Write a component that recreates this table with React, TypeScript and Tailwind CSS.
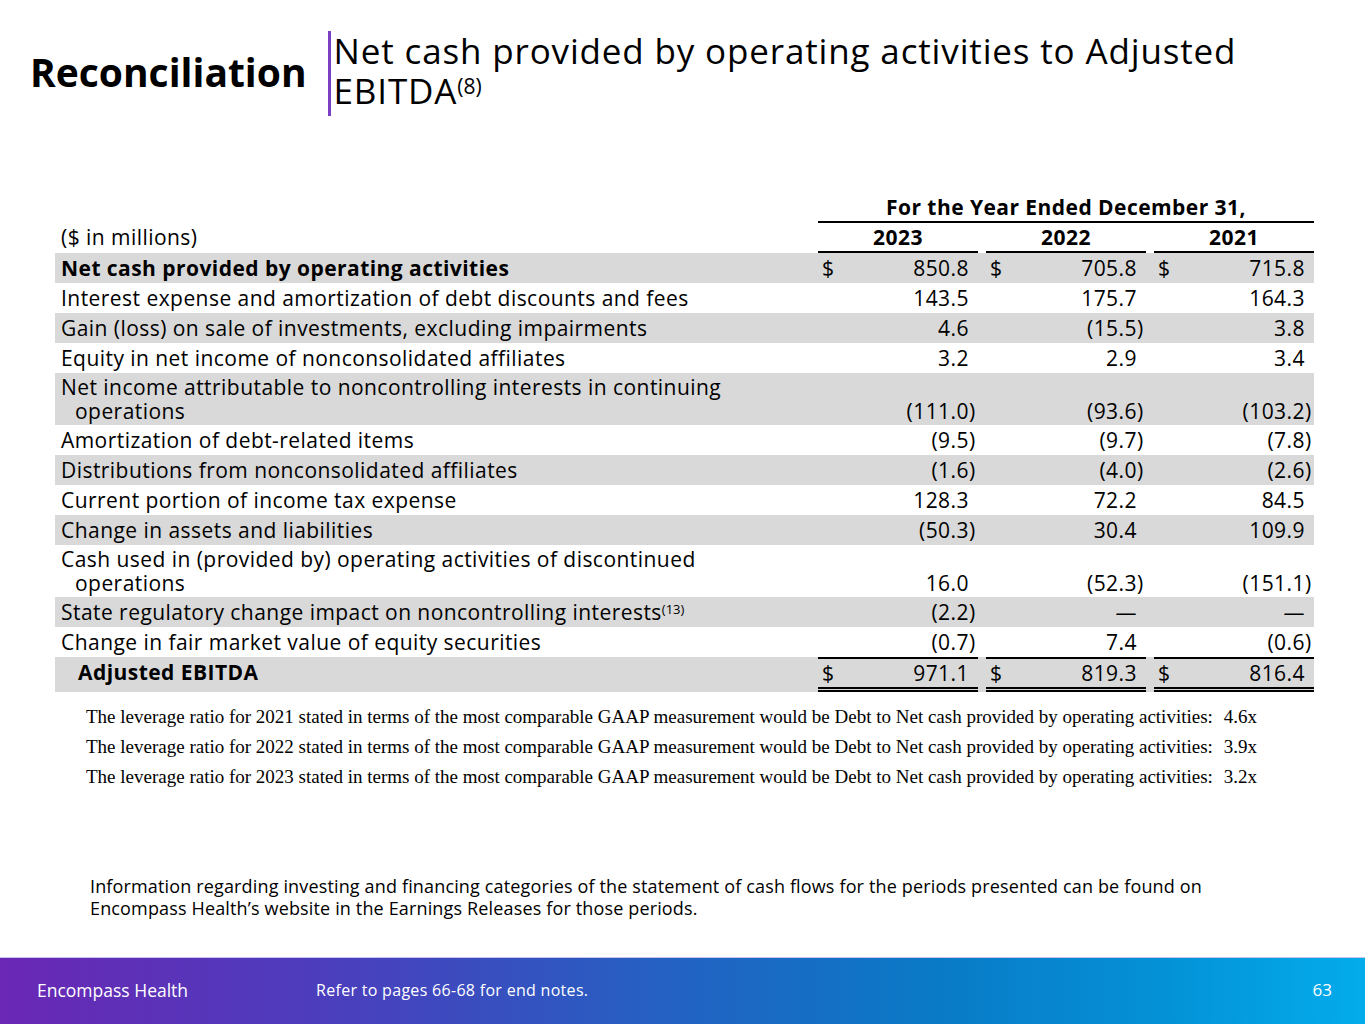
import React from 'react'

type Row = {
  label: string
  cont?: string
  sup?: string
  values: string[]
  dollar?: boolean
  bold?: boolean
  indent?: boolean
  total?: boolean
}

const rows: Row[] = [
  { label: 'Net cash provided by operating activities', values: ['850.8', '705.8', '715.8'], dollar: true, bold: true },
  { label: 'Interest expense and amortization of debt discounts and fees', values: ['143.5', '175.7', '164.3'] },
  { label: 'Gain (loss) on sale of investments, excluding impairments', values: ['4.6', '(15.5)', '3.8'] },
  { label: 'Equity in net income of nonconsolidated affiliates', values: ['3.2', '2.9', '3.4'] },
  {
    label: 'Net income attributable to noncontrolling interests in continuing',
    cont: 'operations',
    values: ['(111.0)', '(93.6)', '(103.2)'],
  },
  { label: 'Amortization of debt-related items', values: ['(9.5)', '(9.7)', '(7.8)'] },
  { label: 'Distributions from nonconsolidated affiliates', values: ['(1.6)', '(4.0)', '(2.6)'] },
  { label: 'Current portion of income tax expense', values: ['128.3', '72.2', '84.5'] },
  { label: 'Change in assets and liabilities', values: ['(50.3)', '30.4', '109.9'] },
  {
    label: 'Cash used in (provided by) operating activities of discontinued',
    cont: 'operations',
    values: ['16.0', '(52.3)', '(151.1)'],
  },
  { label: 'State regulatory change impact on noncontrolling interests', sup: '(13)', values: ['(2.2)', '—', '—'] },
  { label: 'Change in fair market value of equity securities', values: ['(0.7)', '7.4', '(0.6)'] },
  { label: 'Adjusted EBITDA', values: ['971.1', '819.3', '816.4'], dollar: true, bold: true, indent: true, total: true },
]

const leverage = [
  { year: '2021', ratio: '4.6x' },
  { year: '2022', ratio: '3.9x' },
  { year: '2023', ratio: '3.2x' },
]

function Value({ v, dollar, total }: { v: string; dollar?: boolean; total?: boolean }) {
  const neg = v.startsWith('(')
  const body = neg ? v.slice(0, -1) : v
  return (
    <div
      className={
        'flex items-end justify-between pl-[4px] ' +
        (total ? 'border-t-2 border-b-[5px] border-black leading-[28px]' : '')
      }
      style={total ? { borderBottomStyle: 'double' } : undefined}
    >
      <span>{dollar ? '$' : ''}</span>
      <span className="flex">
        <span>{body}</span>
        <span className="inline-block w-[9px] text-left">{neg ? ')' : ''}</span>
      </span>
    </div>
  )
}

export default function App() {
  return (
    <div
      className="relative flex h-[1024px] w-[1365px] flex-col overflow-hidden bg-white text-black"
      style={{ fontFamily: '"Open Sans", sans-serif' }}
    >
      {/* title */}
      <div className="flex items-start pl-[30px] pt-[31px]">
        <div className="mt-[16px] text-[39px] font-bold leading-[50px]">Reconciliation</div>
        <div className="ml-[21px] h-[85px] w-[3px] bg-[#7b3fc4]" />
        <div className="ml-[3px] text-[35px] leading-[40px] tracking-[0.85px]">
          Net cash provided by operating activities to Adjusted
          <br />
          EBITDA<sup className="text-[21px] tracking-normal">(8)</sup>
        </div>
      </div>

      {/* table */}
      <div className="ml-[55px] mt-[77px] w-[1259px] text-[21px] tracking-[0.45px]">
        <div className="grid grid-cols-[755px_160px_160px_160px] gap-x-2">
          <div />
          <div className="col-span-3 border-b-2 border-black text-center font-bold leading-[28px]">
            For the Year Ended December 31,
          </div>
        </div>
        <div className="grid h-[30px] grid-cols-[755px_160px_160px_160px] gap-x-2">
          <div className="pl-[6px] leading-[28px]">($ in millions)</div>
          {['2023', '2022', '2021'].map((y) => (
            <div key={y} className="border-b-2 border-black text-center font-bold leading-[28px]">
              {y}
            </div>
          ))}
        </div>
        {rows.map((r, i) => (
          <div
            key={i}
            className={
              'grid grid-cols-[755px_160px_160px_160px] gap-x-2 ' +
              (i % 2 === 0 ? 'bg-[#d9d9d9] ' : '') +
              (r.cont ? 'py-[2px] leading-[24px]' : 'leading-[30px]')
            }
          >
            <div className={(r.bold ? 'font-bold ' : '') + (r.indent ? 'pl-[23px]' : 'pl-[6px]')}>
              {r.label}
              {r.sup && <sup className="text-[13px] tracking-normal">{r.sup}</sup>}
              {r.cont && <div className="pl-[14px]">{r.cont}</div>}
            </div>
            {r.values.map((v, j) => (
              <Value key={j} v={v} dollar={r.dollar} total={r.total} />
            ))}
          </div>
        ))}
      </div>

      {/* leverage */}
      <div
        className="ml-[86px] mt-[10px] w-[1200px] text-[19px] leading-[30px]"
        style={{ fontFamily: '"Liberation Serif", serif' }}
      >
        {leverage.map((l) => (
          <div key={l.year} className="flex whitespace-nowrap">
            <span>
              The leverage ratio for {l.year} stated in terms of the most comparable GAAP measurement would be Debt to
              Net cash provided by operating activities:
            </span>
            <span className="ml-[11px]">{l.ratio}</span>
          </div>
        ))}
      </div>

      <div className="ml-[90px] mt-[83px] text-[18px] leading-[22px] tracking-[0.15px]">
        Information regarding investing and financing categories of the statement of cash flows for the periods
        presented can be found on
        <br />
        Encompass Health’s website in the Earnings Releases for those periods.
      </div>

      {/* footer */}
      <div className="mt-auto flex h-[67px] items-center border-t border-[#c9c2ee] bg-[linear-gradient(90deg,#6a27b5_0%,#4a3fbd_25%,#2560c2_48%,#0a79c6_68%,#0491d6_85%,#03aceb_100%)] pb-[2px] text-white">
        <div className="ml-[37px] w-[279px] text-[17.5px]">Encompass Health</div>
        <div className="text-[16px] tracking-[0.3px]">Refer to pages 66-68 for end notes.</div>
        <div className="ml-auto mr-[33px] text-[17px]">63</div>
      </div>
    </div>
  )
}
